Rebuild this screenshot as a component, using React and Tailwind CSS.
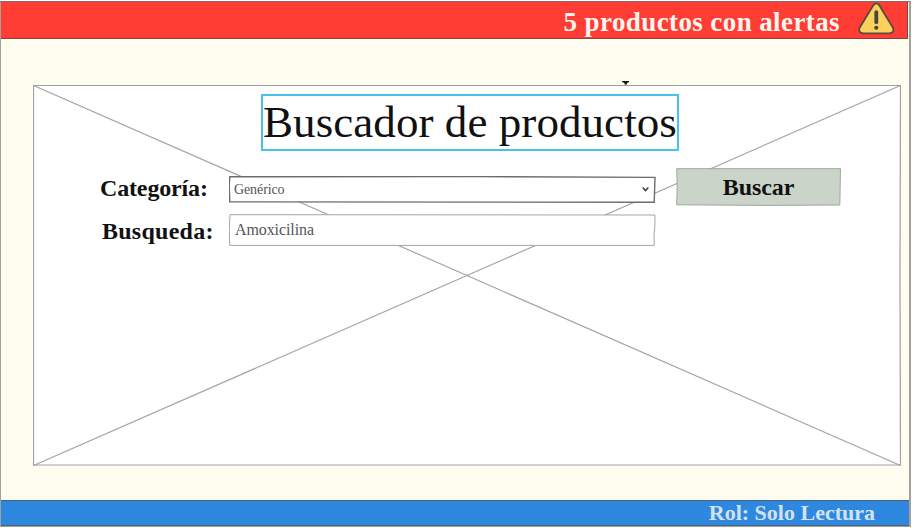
function WarningIcon() {
  return (
    <svg className="mb-[3px] h-[33px] w-[37px] shrink-0" viewBox="0 0 37 34" preserveAspectRatio="none" fill="none">
      <path
        d="M15.3 3.4 Q18.3 -0.8 21.3 3.4 L35 26.5 Q36.6 32 31.3 32.4 H5.3 Q0 32 1.6 26.5 Z"
        fill="#fcd05c"
        stroke="#5c4a3c"
        strokeWidth="1.8"
        strokeLinejoin="round"
      />
      <path d="M18.3 10.5 V20.8" stroke="#46463a" strokeWidth="3.8" strokeLinecap="round" />
      <circle cx="18.3" cy="26.5" r="2.1" fill="#46463a" />
    </svg>
  );
}

function Placeholder() {
  return (
    <svg className="absolute inset-0 h-full w-full" viewBox="0 0 868 381" fill="none">
      <path d="M0.5 0.5 L867.5 380.5 M0.5 380.5 L867.5 0.5" stroke="#a6a6a6" strokeWidth="1.2" />
      <path d="M0.5 0.5 H867.5 L867 190 L867.5 380 H0.5 V0.5" stroke="#a0a0a0" strokeWidth="1.2" />
    </svg>
  );
}

function Field({ children, select }) {
  return (
    <div
      className={
        select
          ? "relative flex h-[27px] w-[427px] items-center justify-between pl-[5px] pr-[6px]"
          : "relative flex h-[32px] w-[427px] items-center pl-[6px]"
      }
    >
      {select ? (
        <svg className="absolute inset-0 h-full w-full" viewBox="0 0 427 27">
          <path d="M0.8 0.8 L250 0.6 L426 1.4 L425.2 26.3 L0.8 25.8 L0.2 10 Z" fill="white" stroke="#6c6c6c" strokeWidth="1.4" />
        </svg>
      ) : (
        <svg className="absolute inset-0 h-full w-full" viewBox="0 0 427 32">
          <path d="M1 0.7 L426 1 L425.8 14 L425 20 L425.3 31.4 L0.7 31.4 L0.3 15 Z" fill="white" stroke="#a5a5a5" strokeWidth="1" />
        </svg>
      )}
      {children}
    </div>
  );
}

export default function App() {
  return (
    <div className="h-[528px] w-[914px] overflow-hidden bg-white pt-px font-['Liberation_Serif',serif]">
      <div className="flex h-[526px] w-[911px] flex-col border-y border-l border-r-2 border-[#a2a29a] border-t-[#77716d] bg-[#fffdef]">
        <header className="flex h-[37px] w-[907px] shrink-0 items-center justify-end border-b border-r border-[#85423c] bg-[#ff3d34] pr-[12px]">
          <span className="mr-[18px] mt-[3px] whitespace-nowrap text-[27px] font-bold leading-[30px] tracking-[0.4px] text-[#fff5ee]">
            5 productos con alertas
          </span>
          <WarningIcon />
        </header>

        <main className="flex h-[461px] shrink-0 flex-col pl-[32px]">
          <div className="flex h-[46px] items-end pl-[588px]">
            <svg className="h-[4px] w-[9px]" viewBox="0 0 9 4">
              <path d="M1 0 H8 V1 L6 2 V3.5 H3.5 V2 L1 1 Z" fill="#111" />
            </svg>
          </div>
          <section className="relative h-[381px] w-[868px] bg-white">
            <Placeholder />
            <div className="relative flex flex-col">
              <h1 className="ml-[228px] mt-[9px] h-[57px] w-[418px] whitespace-nowrap border-2 border-[#4abff0] bg-white text-[45px] leading-[53px] tracking-[0.07px] text-[#111]">
                Buscador de productos
              </h1>
              <div className="mt-[17px] flex h-[38px] items-center">
                <label className="ml-[67px] mt-[2px] w-[129px] whitespace-nowrap text-[24px] font-bold leading-[28px] tracking-[-0.15px] text-[#111]">
                  Categoría:
                </label>
                <div className="mt-[4px]">
                  <Field select>
                    <span className="relative text-[14px] tracking-[-0.1px] text-[#555]">Genérico</span>
                    <svg className="relative h-[8px] w-[9px]" viewBox="0 0 9 8" fill="none">
                      <path d="M1.7 2.5 L4.5 5.5 L7.3 2.5" stroke="#444" strokeWidth="1.7" />
                    </svg>
                  </Field>
                </div>
                <button className="relative ml-[20px] h-[38px] w-[165px]">
                  <svg className="absolute inset-0 h-full w-full" viewBox="0 0 165 38">
                    <path d="M0.7 0.7 H164.5 L163.8 37 L90 37.4 L0.7 36.8 L1.2 18 Z" fill="#cad4c9" stroke="#a0a69f" strokeWidth="1" />
                  </svg>
                  <span className="relative text-[24px] font-bold leading-[28px] tracking-[-0.1px] text-[#111]">Buscar</span>
                </button>
              </div>
              <div className="mt-[8px] flex h-[32px] items-center">
                <label className="ml-[69px] mt-[2px] w-[127px] whitespace-nowrap text-[24px] font-bold leading-[28px] tracking-[0.25px] text-[#111]">
                  Busqueda:
                </label>
                <Field>
                  <span className="relative text-[16px] tracking-[-0.1px] text-[#555]">Amoxicilina</span>
                </Field>
              </div>
            </div>
          </section>
        </main>

        <footer className="flex h-[26px] shrink-0 items-center justify-end border-y border-[#4a6278] bg-[#2f88df] pr-[34px]">
          <span className="whitespace-nowrap text-[22px] font-bold leading-[24px] text-[#d3e2f1]">
            Rol: Solo Lectura
          </span>
        </footer>
      </div>
    </div>
  );
}
